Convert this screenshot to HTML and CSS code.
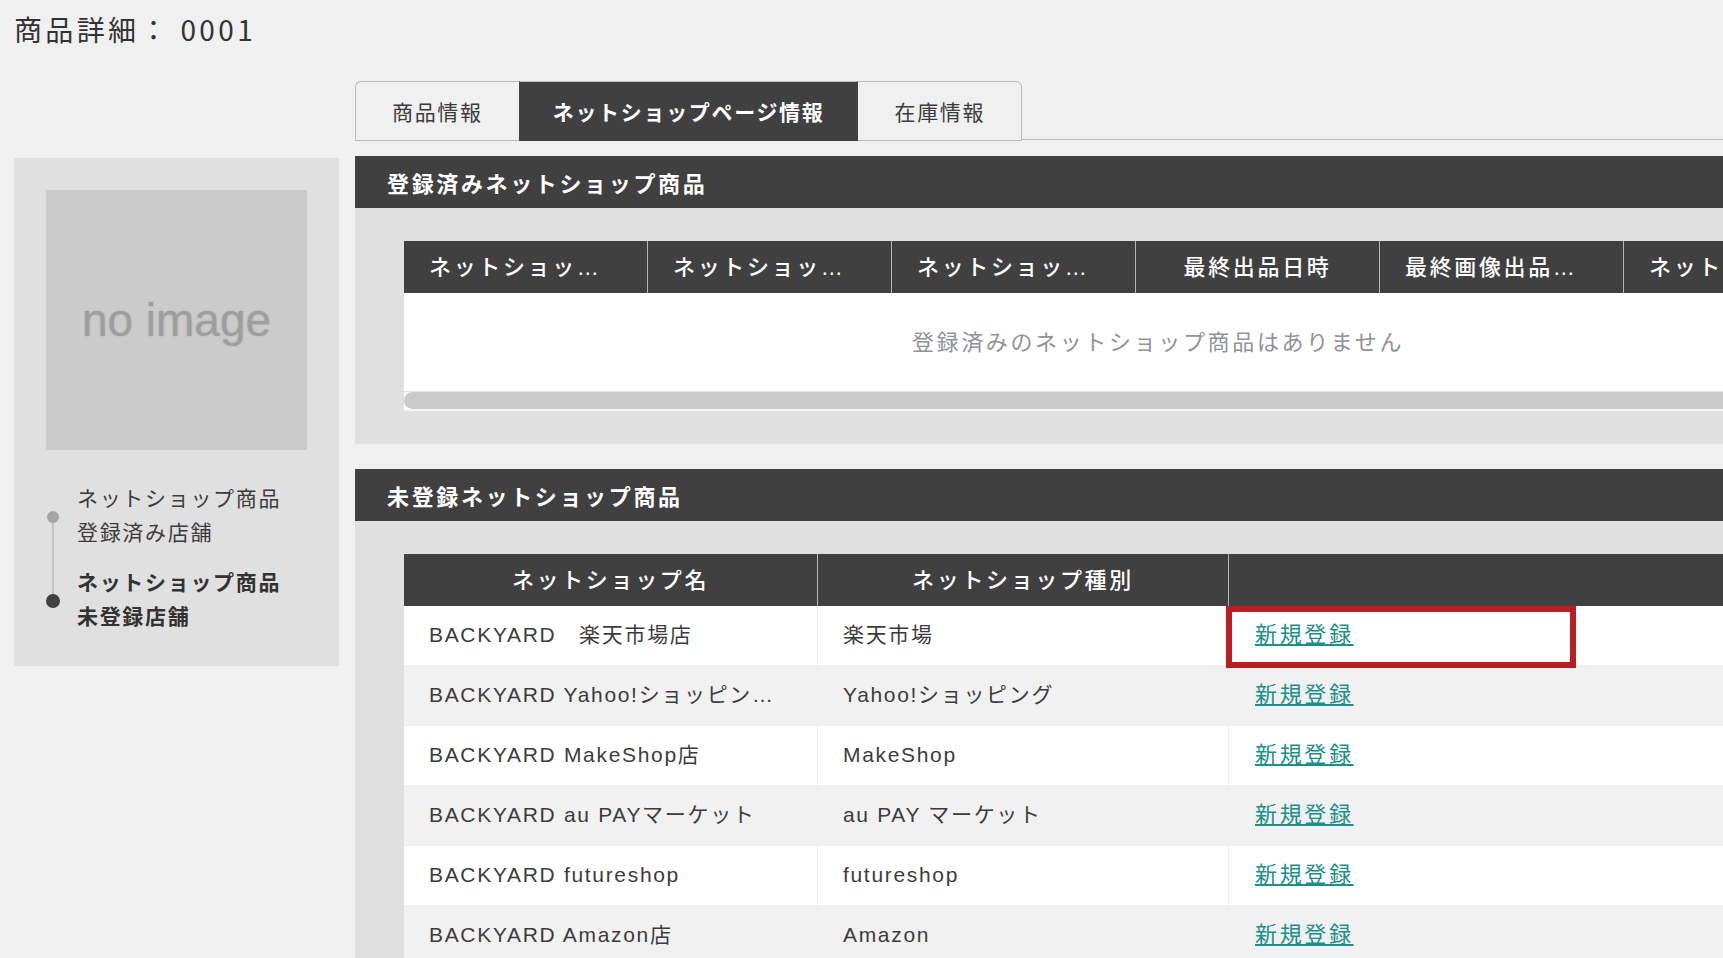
FILE: index.html
```html
<!DOCTYPE html>
<html lang="ja">
<head>
    <meta charset="UTF-8">
    <meta name="viewport" content="width=device-width, initial-scale=1.0">
    <title>商品詳細</title>
    <link rel="stylesheet" href="styles.css">
</head>
<body>
    <div class="page">
        <header>
            <h1>商品詳細： 0001</h1>
        </header>
        <div class="layout">
            <aside class="sidebar">
                <div class="no-image">no image</div>
                <ul class="steps">
                    <li><span class="dot"></span><a href="#registered">ネットショップ商品<br>登録済み店舗</a></li>
                    <li class="current"><span class="dot"></span><a href="#unregistered">ネットショップ商品<br>未登録店舗</a></li>
                </ul>
            </aside>
            <main>
                <nav class="tabs">
                    <button type="button">商品情報</button>
                    <button type="button" class="active">ネットショップページ情報</button>
                    <button type="button">在庫情報</button>
                </nav>

                <section class="panel" id="registered">
                    <h2>登録済みネットショップ商品</h2>
                    <div class="panel-body">
                        <div class="table-wrap">
                            <table class="registered-table">
                                <thead>
                                    <tr>
                                        <th>ネットショップ名</th>
                                        <th>ネットショップ種別</th>
                                        <th>ネットショップ商品名</th>
                                        <th>最終出品日時</th>
                                        <th>最終画像出品日時</th>
                                        <th>ネットショップ商品コード</th>
                                        <th>操作</th>
                                    </tr>
                                </thead>
                            </table>
                            <p class="empty">登録済みのネットショップ商品はありません</p>
                            <div class="scrollbar"><div class="thumb"></div></div>
                        </div>
                    </div>
                </section>

                <section class="panel" id="unregistered">
                    <h2>未登録ネットショップ商品</h2>
                    <div class="panel-body">
                        <table class="shop-table">
                            <thead>
                                <tr>
                                    <th class="name">ネットショップ名</th>
                                    <th class="type">ネットショップ種別</th>
                                    <th></th>
                                </tr>
                            </thead>
                            <tbody>
                                <tr>
                                    <td>BACKYARD　楽天市場店</td>
                                    <td>楽天市場</td>
                                    <td class="action marked"><a href="#">新規登録</a></td>
                                </tr>
                                <tr>
                                    <td>BACKYARD Yahoo!ショッピング店</td>
                                    <td>Yahoo!ショッピング</td>
                                    <td class="action"><a href="#">新規登録</a></td>
                                </tr>
                                <tr>
                                    <td>BACKYARD MakeShop店</td>
                                    <td>MakeShop</td>
                                    <td class="action"><a href="#">新規登録</a></td>
                                </tr>
                                <tr>
                                    <td>BACKYARD au PAYマーケット</td>
                                    <td>au PAY マーケット</td>
                                    <td class="action"><a href="#">新規登録</a></td>
                                </tr>
                                <tr>
                                    <td>BACKYARD futureshop</td>
                                    <td>futureshop</td>
                                    <td class="action"><a href="#">新規登録</a></td>
                                </tr>
                                <tr>
                                    <td>BACKYARD Amazon店</td>
                                    <td>Amazon</td>
                                    <td class="action"><a href="#">新規登録</a></td>
                                </tr>
                            </tbody>
                        </table>
                    </div>
                </section>
            </main>
        </div>
    </div>
</body>
</html>
```
FILE: styles.css
```css
*, *::before, *::after {
    box-sizing: border-box;
}
body {
    margin: 0;
    font-family: "Noto Sans CJK JP", sans-serif;
    font-size: 21px;
    color: #3c3c3c;
    background-color: #f0f0f0;
    overflow-x: hidden;
}
a, td, button {
    letter-spacing: 0.08em;
}
h1, h2, th, .empty, .action a {
    letter-spacing: 0.12em;
}
.page {
    min-width: 1975px;
    padding: 0 14px;
}
h1 {
    margin: 0;
    padding: 8px 0 31px;
    color: #333;
    font-size: 28px;
    font-weight: 400;
    line-height: 42px;
}
.layout {
    display: grid;
    grid-template-columns: 325px 1fr;
    gap: 16px;
    align-items: start;
}

/* sidebar */
.sidebar {
    margin-top: 77px;
    padding: 32px 32px 34px;
    background-color: #e0e0e0;
}
.no-image {
    display: flex;
    align-items: center;
    justify-content: center;
    height: 260px;
    background-color: #cbcbcb;
    color: #9e9e9e;
    font-family: "Liberation Sans", Arial, sans-serif;
    font-size: 46px;
    text-shadow: 0 0 2px #aaa;
}
.steps {
    display: flex;
    flex-direction: column;
    gap: 16px;
    margin: 30px 0 0;
    padding: 0;
    list-style: none;
}
.steps li {
    position: relative;
    display: grid;
    grid-template-columns: 14px 1fr;
    gap: 17px;
    line-height: 34px;
}
.steps li:first-child::before {
    content: "";
    position: absolute;
    top: 37px;
    left: 6px;
    width: 2px;
    height: 84px;
    background-color: #c2c2c2;
}
.steps a {
    color: inherit;
    text-decoration: none;
    white-space: nowrap;
}
.dot {
    position: relative;
    justify-self: center;
    width: 12px;
    height: 12px;
    margin-top: 31px;
    border-radius: 50%;
    background-color: #a6a6a6;
}
.current {
    color: #333;
    font-weight: 700;
}
.current .dot {
    width: 14px;
    height: 14px;
    margin-top: 30px;
    background-color: #404040;
}

/* tabs */
main {
    min-width: 0;
}
.tabs {
    display: flex;
    height: 59px;
    margin-bottom: 16px;
    border-bottom: 1px solid #bbb;
}
.tabs button {
    height: 60px;
    padding: 0 36px;
    border: 1px solid #bbb;
    background-color: #f0f0f0;
    color: #3c3c3c;
    font-family: inherit;
    font-size: 21px;
    white-space: nowrap;
    cursor: pointer;
}
.tabs button:first-child {
    border-right: none;
    border-radius: 6px 0 0 0;
}
.tabs button:last-child {
    border-left: none;
    border-radius: 0 6px 0 0;
}
.tabs .active {
    padding: 0 33px;
    border-color: #404040;
    border-top-color: #bbb;
    background-color: #404040;
    color: #fff;
    font-weight: 700;
}

/* panels */
.panel {
    margin-bottom: 25px;
    background-color: #e0e0e0;
}
.panel h2 {
    margin: 0;
    padding: 0 32px;
    background-color: #404040;
    color: #fff;
    font-size: 22px;
    font-weight: 700;
    line-height: 52px;
}
.panel-body {
    padding: 33px 49px;
}
table {
    width: 100%;
    border-collapse: separate;
    border-spacing: 0;
    table-layout: fixed;
    font-family: "Liberation Sans", "Noto Sans CJK JP", sans-serif;
}
th, td {
    padding: 0 25px;
    overflow: hidden;
    text-overflow: ellipsis;
    white-space: nowrap;
}
th {
    height: 52px;
    padding-bottom: 4px;
    border-right: 1px solid #b5b5b5;
    background-color: #404040;
    color: #fff;
    font-size: 22px;
    font-weight: 500;
}
.table-wrap {
    overflow: hidden;
    background-color: #fff;
}
.registered-table {
    width: 1708px;
}
.registered-table th {
    width: 244px;
}
.empty {
    margin: 0;
    padding-bottom: 4px;
    border-bottom: 1px solid #e4e4e4;
    color: #909399;
    font-size: 22px;
    line-height: 94px;
    text-align: center;
}
.scrollbar {
    height: 19px;
    border-bottom: 2px solid #f4f4f4;
}
.thumb {
    height: 17px;
    border-radius: 9px;
    background-color: #cbcbcb;
}
.shop-table .name {
    width: 414px;
}
.shop-table .type {
    width: 411px;
}
td {
    height: 60px;
    padding-bottom: 1px;
    border-right: 1px solid #efefef;
    border-bottom: 1px solid #efefef;
    background-color: #fff;
    line-height: 56px;
}
tbody tr:nth-child(even) td {
    background-color: #f1f1f1;
}
.action {
    position: relative;
    overflow: visible;
    padding-left: 26px;
    font-size: 22px;
}
.action a {
    color: #1b8f8a;
}
.marked::after {
    content: "";
    position: absolute;
    top: 0;
    left: -3px;
    width: 350px;
    height: 62px;
    border: 6px solid #b91f22;
    z-index: 1;
}
```
